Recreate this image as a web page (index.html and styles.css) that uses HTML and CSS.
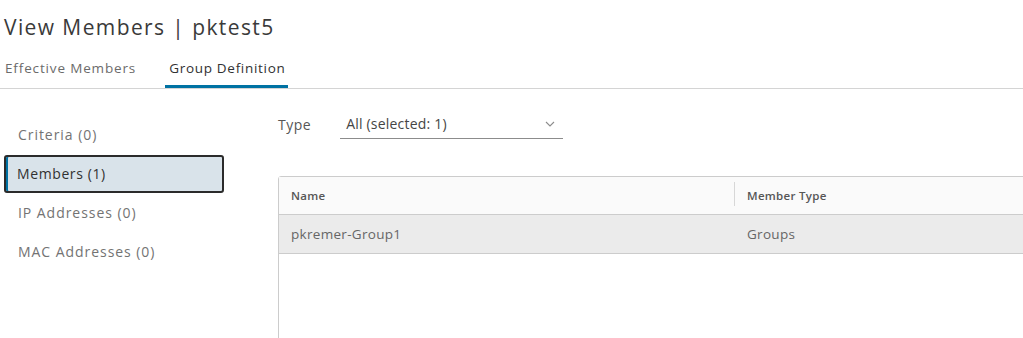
FILE: index.html
```html
<!DOCTYPE html>
<html lang="en">
<head>
  <meta charset="UTF-8" />
  <title>View Members | pktest5</title>
  <link rel="stylesheet" href="styles.css">
</head>
<body>

  <!-- Header -->
  <h1 class="page-title">View Members | pktest5</h1>

  <div class="tabs">
    <div class="tab">Effective Members</div>
    <div class="tab active">Group Definition</div>
  </div>

  <div class="content">
    <!-- Left nav -->
    <div class="side-nav">
      <div class="nav-item">Criteria (0)</div>
      <div class="nav-item selected">Members (1)</div>
      <div class="nav-item">IP Addresses (0)</div>
      <div class="nav-item">MAC Addresses (0)</div>
    </div>

    <!-- Members panel -->
    <div class="panel">
      <div class="filter">
        <span class="filter-label">Type</span>
        <div class="select">
          <span>All (selected: 1)</span>
          <svg class="chevron" width="10" height="6" viewBox="0 0 10 6">
            <path d="M1 1 L5 5 L9 1" fill="none" stroke="#8c8c8c" stroke-width="1.1"/>
          </svg>
        </div>
      </div>

      <div class="grid">
        <div class="grid-head">
          <div class="cell col-name">Name</div>
          <div class="cell col-type"><span class="divider"></span>Member Type</div>
        </div>
        <div class="grid-row">
          <div class="cell col-name">pkremer-Group1</div>
          <div class="cell col-type">Groups</div>
        </div>
        <div class="grid-body"></div>
      </div>
    </div>
  </div>

</body>
</html>
```

FILE: styles.css
```css
html, body {
  margin: 0;
  padding: 0;
  background: #fff;
  color: #565656;
  font-family: 'Open Sans', Lato, sans-serif;
  overflow: hidden;
}

.page-title {
  margin: 0;
  padding: 13px 0 0 4px;
  font-size: 21px;
  font-weight: 400;
  color: #3a3a3a;
  line-height: 28px;
  letter-spacing: 1.4px;
}

.tabs {
  display: flex;
  gap: 33px;
  margin-top: 18px;
  padding-left: 5px;
  border-bottom: 1px solid #d4d4d4;
}

.tab {
  font-size: 13.5px;
  color: #6b6b6b;
  padding: 0 0 8px;
  border-bottom: 3px solid transparent;
  letter-spacing: 0.85px;
}

.tab.active {
  color: #313131;
  border-bottom-color: #0072a3;
  padding-left: 4px;
  padding-right: 2px;
  margin-left: -4px;
  letter-spacing: 0.7px;
}

.content {
  display: flex;
}

.side-nav {
  width: 220px;
  padding: 26px 0 0 4px;
  flex-shrink: 0;
}

.nav-item {
  font-size: 14px;
  color: #737373;
  height: 39px;
  line-height: 38px;
  padding-left: 14px;
  letter-spacing: 0.95px;
}

.nav-item:first-child {
  height: 40px;
  line-height: 40px;
}

.nav-item.selected {
  height: 34px;
  line-height: 34px;
  margin: 0 0 1px;
  padding-left: 11px;
  color: #313131;
  background: #d9e3ea;
  border: 2px solid #2b2b2b;
  border-radius: 3px;
  box-shadow: inset 2px 0 #0072a3;
  letter-spacing: 0.6px;
}

.panel {
  flex: 1;
  padding: 25px 0 0 54px;
}

.filter {
  display: flex;
  align-items: flex-end;
  gap: 30px;
  font-size: 14px;
  color: #565656;
  letter-spacing: 0.5px;
}

.filter-label {
  padding-bottom: 5px;
}

.select {
  display: flex;
  justify-content: space-between;
  align-items: center;
  width: 211px;
  padding: 0 6px 5px;
  margin-left: -1px;
  border-bottom: 1px solid #8c8c8c;
  color: #454545;
  letter-spacing: 0.2px;
}

.chevron {
  margin-right: 2px;
}

.grid {
  margin-top: 37px;
  width: 800px;
  height: 170px;
  border: 1px solid #ccc;
  border-radius: 3px 0 0 0;
  font-size: 13px;
}

.grid-head,
.grid-row {
  display: flex;
  height: 37px;
  align-items: center;
  border-bottom: 1px solid #ccc;
}

.grid-row {
  height: 38px;
}

.grid-head {
  background: #fafafa;
  font-size: 11.5px;
  font-weight: 600;
  color: #565656;
  letter-spacing: 0.3px;
}

.grid-row {
  background: #ebebeb;
  color: #666;
  font-size: 13.5px;
  letter-spacing: 0.3px;
}

.cell {
  padding-left: 12px;
}

.col-name {
  width: 443px;
}

.col-type {
  position: relative;
  padding-left: 13px;
}

.divider {
  position: absolute;
  left: 0;
  top: -6px;
  height: 24px;
  border-left: 1px solid #d7d7d7;
}
```
